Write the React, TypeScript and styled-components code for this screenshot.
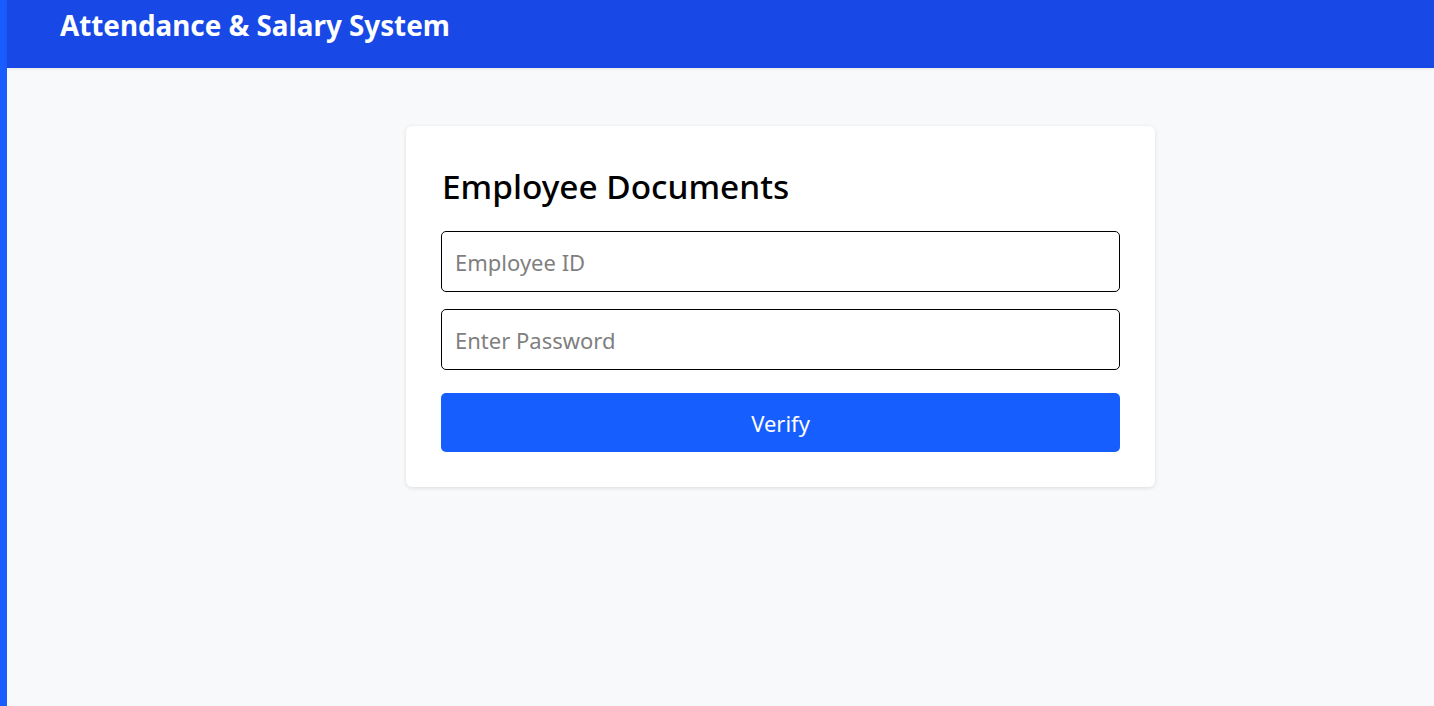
import { createGlobalStyle, styled } from "styled-components";

const GlobalStyle = createGlobalStyle`
  html, body {
    margin: 0;
    padding: 0;
    height: 100%;
  }
  body {
    font-family: "Noto Sans", "Open Sans", sans-serif;
    background: #f8f9fa;
  }
  #root {
    height: 100%;
  }
`;

const Shell = styled.div`
  display: flex;
  min-height: 100vh;
`;

const SideStrip = styled.div`
  width: 7px;
  flex-shrink: 0;
  background: #195cff;
`;

const Main = styled.div`
  flex: 1;
  display: flex;
  flex-direction: column;
  background: #f8f9fa;
`;

const Header = styled.header`
  height: 68px;
  background: #1849e6;
  padding: 6px 0 0 53px;
  box-sizing: border-box;
  box-shadow: 0 1px 3px rgba(0, 0, 0, 0.08);
`;

const Brand = styled.h1`
  margin: 0;
  color: #fff;
  font-size: 27.8px;
  font-weight: 700;
  line-height: 38px;
`;

const Content = styled.main`
  display: flex;
  justify-content: center;
  padding: 58px 0 0 120px;
`;

const Card = styled.div`
  width: 749px;
  box-sizing: border-box;
  background: #fff;
  border-radius: 6px;
  box-shadow: 0 1px 4px rgba(0, 0, 0, 0.12);
  padding: 38px 35px 35px 35px;
  display: flex;
  flex-direction: column;
`;

const Title = styled.h2`
  margin: 0 0 23px 1px;
  font-size: 33.4px;
  font-weight: 500;
  line-height: 44px;
  color: #000;
`;

const Field = styled.input<{ $gap?: number }>`
  height: 61px;
  box-sizing: border-box;
  border: 1px solid #000;
  border-radius: 5px;
  padding: 0 13px;
  font-family: inherit;
  font-size: 22px;
  margin-bottom: ${(props) => props.$gap ?? 17}px;
  outline: none;

  &::placeholder {
    color: #7f7f7f;
  }
`;

const Button = styled.button`
  height: 59px;
  border: none;
  border-radius: 5px;
  background: #175eff;
  color: #fff;
  font-family: inherit;
  font-size: 22px;
  cursor: pointer;
`;

function App() {
  return (
    <Shell>
      <GlobalStyle />
      <SideStrip />
      <Main>
        <Header>
          <Brand>Attendance &amp; Salary System</Brand>
        </Header>
        <Content>
          <Card>
            <Title>Employee Documents</Title>
            <Field placeholder="Employee ID" />
            <Field type="password" placeholder="Enter Password" $gap={23} />
            <Button>Verify</Button>
          </Card>
        </Content>
      </Main>
    </Shell>
  );
}

export default App;
